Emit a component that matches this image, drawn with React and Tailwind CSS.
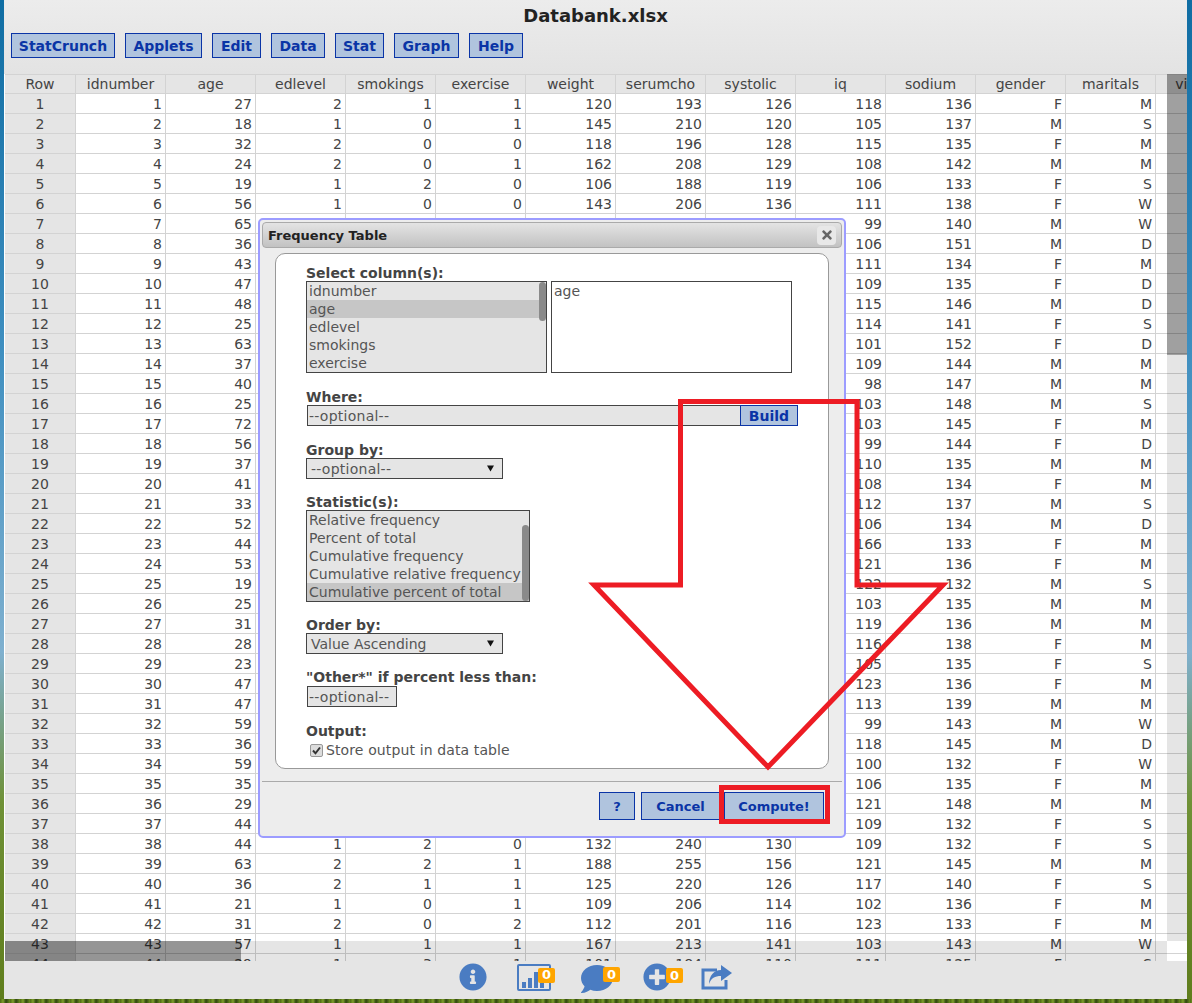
import React from "react";
import { FaInfoCircle, FaComment, FaPlusCircle, FaTimes } from "react-icons/fa";

const columns = ["idnumber", "age", "edlevel", "smokings", "exercise", "weight", "serumcho", "systolic", "iq", "sodium", "gender", "maritals", "visitors"];

const rows = [
  "1 27 2 1 1 120 193 126 118 136 F M",
  "2 18 1 0 1 145 210 120 105 137 M S",
  "3 32 2 0 0 118 196 128 115 135 F M",
  "4 24 2 0 1 162 208 129 108 142 M M",
  "5 19 1 2 0 106 188 119 106 133 F S",
  "6 56 1 0 0 143 206 136 111 138 F W",
  "7 65 - - - - - - 99 140 M W",
  "8 36 - - - - - - 106 151 M D",
  "9 43 - - - - - - 111 134 F M",
  "10 47 - - - - - - 109 135 F D",
  "11 48 - - - - - - 115 146 M D",
  "12 25 - - - - - - 114 141 F S",
  "13 63 - - - - - - 101 152 F D",
  "14 37 - - - - - - 109 144 M M",
  "15 40 - - - - - - 98 147 M M",
  "16 25 - - - - - - 103 148 M S",
  "17 72 - - - - - - 103 145 F M",
  "18 56 - - - - - - 99 144 F D",
  "19 37 - - - - - - 110 135 M M",
  "20 41 - - - - - - 108 134 F M",
  "21 33 - - - - - - 112 137 M S",
  "22 52 - - - - - - 106 134 M D",
  "23 44 - - - - - - 166 133 F M",
  "24 53 - - - - - - 121 136 F M",
  "25 19 - - - - - - 122 132 M S",
  "26 25 - - - - - - 103 135 M M",
  "27 31 - - - - - - 119 136 M M",
  "28 28 - - - - - - 116 138 F M",
  "29 23 - - - - - - 105 135 F S",
  "30 47 - - - - - - 123 136 F M",
  "31 47 - - - - - - 113 139 M M",
  "32 59 - - - - - - 99 143 M W",
  "33 36 - - - - - - 118 145 M D",
  "34 59 - - - - - - 100 132 F W",
  "35 35 - - - - - - 106 135 F M",
  "36 29 - - - - - - 121 148 M M",
  "37 44 - - - - - - 109 132 F S",
  "38 44 1 2 0 132 240 130 109 132 F S",
  "39 63 2 2 1 188 255 156 121 145 M M",
  "40 36 2 1 1 125 220 126 117 140 F S",
  "41 21 1 0 1 109 206 114 102 136 F M",
  "42 31 2 0 2 112 201 116 123 133 F M",
  "43 57 1 1 1 167 213 141 103 143 M W",
  "44 29 1 3 1 101 184 110 111 125 F S",
];

const menu = [
  { label: "StatCrunch", width: "w-[104px]" },
  { label: "Applets", width: "w-[77px]" },
  { label: "Edit", width: "w-[49px]" },
  { label: "Data", width: "w-[54px]" },
  { label: "Stat", width: "w-[49px]" },
  { label: "Graph", width: "w-[65px]" },
  { label: "Help", width: "w-[54px]" },
];

const blueButton = "flex items-center justify-center border border-[#0a34a6] bg-[#b0c4de] font-bold text-[#0a34a6]";

const Label = ({ className, children }) => (
  <div className={`h-[16px] text-[14px] leading-[16px] font-bold text-[#444] ${className}`}>{children}</div>
);

const ListBox = ({ items, selected, width, thumb }) => (
  <div className={`relative h-[92px] ${width} border border-[#444] bg-[#e5e5e5] text-[14px] leading-[18px] text-[#555]`}>
    {items.map((item) => (
      <div key={item} className={item === selected ? "h-[18px] bg-[#c6c6c6] pl-[2px]" : "h-[18px] pl-[2px]"}>
        {item}
      </div>
    ))}
    <div className={`absolute right-0 w-[7px] rounded bg-[#8a8a8a] ${thumb}`} />
  </div>
);

const Dropdown = ({ label, className }) => (
  <div className="flex h-[21px] w-[197px] items-center justify-between border border-[#444] bg-[#e5e5e5] pr-[8px] pl-[4px] text-[14px] leading-[21px] text-[#555]">
    <span className={`pt-[2px] ${className}`}>{label}</span>
    <svg width="7" height="7" viewBox="0 0 7 7">
      <path d="M0 0.5h7L3.5 6.5z" fill="#111" />
    </svg>
  </div>
);

const Badge = ({ className }) => (
  <span className={`absolute flex h-[15px] w-[17px] items-center justify-center rounded-[2px] bg-[#ffa500] text-[13px] font-bold text-white ${className}`}>
    0
  </span>
);

const Dialog = () => (
  <div className="absolute top-[218px] left-[258px] h-[620px] w-[588px] rounded-[5px] border-2 border-[#9c9cff] bg-[#ededed] p-[2px]">
    <div className="flex h-[26px] items-center justify-between rounded-[4px] border border-[#aaa] bg-gradient-to-b from-[#e4e4e4] to-[#c2c2c2] pr-[5px] pl-[5px]">
      <span className="pt-[2px] text-[13px] font-bold text-[#222]">Frequency Table</span>
      <span className="flex h-[19px] w-[19px] items-center justify-center rounded-[4px] bg-[#e8e8e8] text-[#666]">
        <FaTimes size={14} />
      </span>
    </div>
    <div className="mt-[5px] ml-[13px] h-[516px] w-[554px] rounded-[10px] border border-[#999] bg-white pt-[11px] pl-[30px]">
      <Label>Select column(s):</Label>
      <div className="flex gap-[4px]">
        <ListBox
          items={["idnumber", "age", "edlevel", "smokings", "exercise"]}
          selected="age"
          width="w-[241px]"
          thumb="top-0 h-[39px]"
        />
        <div className="h-[92px] w-[241px] border border-[#444] bg-white pl-[2px] text-[14px] leading-[18px] text-[#555]">age</div>
      </div>
      <Label className="mt-[16px]">Where:</Label>
      <div className="ml-[1px] flex h-[21px] w-[491px]">
        <div className="flex-1 border-y border-l border-[#444] bg-[#e5e5e5] pl-[1px] text-[14px] leading-[21px] tracking-[0.25px] text-[#555]">--optional--</div>
        <div className={`${blueButton} w-[58px] pt-[2px] text-[14px]`}>Build</div>
      </div>
      <Label className="mt-[16px]">Group by:</Label>
      <Dropdown label="--optional--" className="tracking-[0.25px]" />
      <Label className="mt-[15px]">Statistic(s):</Label>
      <ListBox
        items={["Relative frequency", "Percent of total", "Cumulative frequency", "Cumulative relative frequency", "Cumulative percent of total"]}
        selected="Cumulative percent of total"
        width="w-[224px]"
        thumb="bottom-0 h-[76px]"
      />
      <Label className="mt-[15px]">Order by:</Label>
      <Dropdown label="Value Ascending" />
      <Label className="mt-[15px] mb-[1px]">"Other*" if percent less than:</Label>
      <div className="ml-[1px] h-[21px] w-[90px] border border-[#444] bg-[#e5e5e5] pl-[1px] text-[14px] leading-[21px] tracking-[0.25px] text-[#555]">--optional--</div>
      <Label className="mt-[16px]">Output:</Label>
      <div className="mt-[1px] flex h-[20px] items-center pl-[4px] text-[14px] tracking-[0.12px] text-[#555]">
        <span className="mr-[3px] flex h-[13px] w-[13px] items-center justify-center rounded-[2px] border border-[#999] bg-[#dcdcdc]">
          <svg width="11" height="11" viewBox="0 0 11 11">
            <path d="M2 5.5l2.5 2.8L9 2.5" fill="none" stroke="#333" strokeWidth="2" />
          </svg>
        </span>
        Store output in data table
      </div>
    </div>
    <div className="mt-[12px] border-t border-[#aaa]" />
    <div className="mt-[10px] mr-[18px] flex justify-end text-[13px]">
      <div className={`${blueButton} h-[28px] w-[36px] pt-[2px]`}>?</div>
      <div className={`${blueButton} ml-[6px] h-[28px] w-[79px] pt-[2px]`}>Cancel</div>
      <div className={`${blueButton} ml-[4px] h-[28px] w-[100px] pt-[2px]`}>Compute!</div>
    </div>
  </div>
);

const Annotation = () => (
  <svg className="pointer-events-none absolute top-0 left-0" width="1192" height="1003" viewBox="0 0 1192 1003">
    <polygon
      points="680.5,401.5 857,401.5 857,585 943,585 768,767 594,585 680.5,585"
      fill="none"
      stroke="#ed1c24"
      strokeWidth="5"
    />
    <rect x="721.5" y="787.5" width="106" height="34" fill="none" stroke="#ed1c24" strokeWidth="5" />
  </svg>
);

const App = () => {
  return (
    <div className="relative h-[1003px] w-[1192px] overflow-hidden bg-[linear-gradient(180deg,#0f6da3_0%,#3f8fc0_35%,#7fb0cf_65%,#6f9136_80%,#5f7d1c_100%)] font-['DejaVu_Sans',sans-serif]">
      <div className="ml-[4px] flex h-[999px] w-[1183px] flex-col bg-[#e5e5e5]">
        <div className="h-[74px] shrink-0 bg-gradient-to-b from-[#ececec] to-[#e3e3e3]">
          <div className="h-[33px] pt-[5px] text-center text-[18px] leading-[22px] font-bold text-[#222]">Databank.xlsx</div>
          <div className="flex gap-[10px] pl-[7px]">
            {menu.map((item) => (
              <div key={item.label} className={`${blueButton} h-[25px] pt-[2px] ${item.width} text-[14px]`}>
                {item.label}
              </div>
            ))}
          </div>
        </div>

        <div className="relative flex-1 overflow-hidden bg-white pl-[1px] text-[14px] text-[#444]">
          <div className="flex h-[20px] w-[1260px] border-t border-b border-[#d3d3d3] bg-[#e5e5e5] leading-[18px]">
            <div className="w-[71px] shrink-0 border-r border-[#d3d3d3] text-center">Row</div>
            {columns.map((col) => (
              <div key={col} className="w-[90px] shrink-0 border-r border-[#d3d3d3] text-center">
                {col}
              </div>
            ))}
          </div>
          {rows.map((row) => {
            const cells = row.split(" ");
            return (
              <div key={cells[0]} className="flex h-[20px] w-[1260px] border-b border-[#d3d3d3] leading-[21px]">
                <div className="w-[71px] shrink-0 border-r border-[#d3d3d3] bg-[#e5e5e5] text-center">{cells[0]}</div>
                {cells.map((cell, i) => (
                  <div key={i} className="w-[90px] shrink-0 border-r border-[#d3d3d3] pr-[3px] text-right">
                    {cell === "-" ? "" : cell}
                  </div>
                ))}
              </div>
            );
          })}
          {/* scrollbars float over the table */}
          <div className="absolute top-0 right-0 h-[867px] w-[20px] bg-black/10" />
          <div className="absolute top-0 right-0 h-[281px] w-[20px] bg-black/30" />
          <div className="absolute top-[867px] left-[1px] h-[20px] w-[1162px] bg-black/10" />
          <div className="absolute top-[867px] left-[1px] h-[20px] w-[236px] bg-black/35" />
        </div>

        <div className="flex h-[38px] shrink-0 items-center justify-center gap-[30px] bg-[#e5e5e5] pb-[6px] text-[#4a7cc2]">
          <FaInfoCircle size={28} />
          <div className="relative">
            <svg width="34" height="27" viewBox="0 0 34 27" className="block">
              <rect x="1" y="1" width="32" height="25" rx="1" fill="none" stroke="currentColor" strokeWidth="2" />
              <path d="M5 18h4v6H5zM11 14h4v10h-4zM17 8h4v16h-4zM23 12h4v12h-4z" fill="currentColor" />
            </svg>
            <Badge className="top-[4px] left-[21px]" />
          </div>
          <div className="relative mt-[4px]">
            <FaComment size={32} />
            <Badge className="top-[4px] left-[22px]" />
          </div>
          <div className="relative">
            <FaPlusCircle size={28} />
            <Badge className="top-[5px] left-[23px]" />
          </div>
          <svg width="31" height="25" viewBox="0 0 31 25">
            <path d="M16 5H2v18h23v-8" fill="none" stroke="currentColor" strokeWidth="3" />
            <path d="M20 0l11 8-11 8v-5c-6 0-10 2-12 8 0-8 5-14 12-14z" fill="currentColor" />
          </svg>
        </div>
      </div>
      <div className="h-[4px] bg-[repeating-linear-gradient(90deg,#4c6a12_0px,#7f9f2c_3px,#2f4510_6px,#6a8a1e_10px)]" />

      <Dialog />
      <Annotation />
    </div>
  );
};

export default App;
